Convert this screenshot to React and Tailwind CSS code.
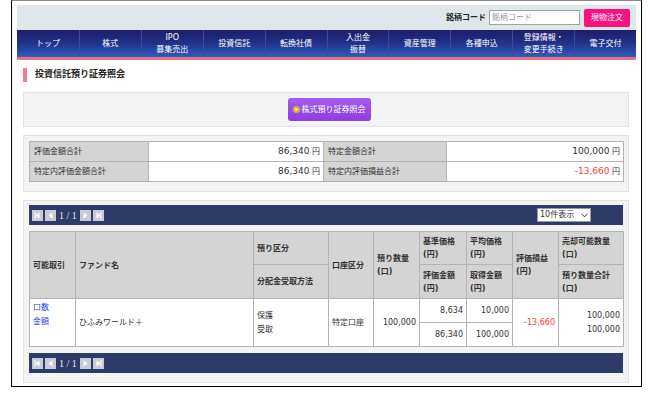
import React from 'react';

const navItems = [
  ['トップ'],
  ['株式'],
  ['IPO', '募集売出'],
  ['投資信託'],
  ['転換社債'],
  ['入出金', '振替'],
  ['資産管理'],
  ['各種申込'],
  ['登録情報・', '変更手続き'],
  ['電子交付'],
];

const PagerBtn = ({ dir, bar }) => (
  <svg width="11" height="11" viewBox="0 0 11 11">
    <rect width="11" height="11" fill="#c9ccd6" />
    {dir === 'left' ? (
      <>
        <polygon points="7.5,2.5 7.5,8.5 3.5,5.5" fill="#fff" />
        {bar && <rect x="2.5" y="2.5" width="1.2" height="6" fill="#fff" />}
      </>
    ) : (
      <>
        <polygon points="3.5,2.5 3.5,8.5 7.5,5.5" fill="#fff" />
        {bar && <rect x="7.3" y="2.5" width="1.2" height="6" fill="#fff" />}
      </>
    )}
  </svg>
);

const Pager = ({ withSelect }) => (
  <div className="h-[20px] bg-[#2c3b67] flex items-center pl-[3px] pr-[32px]">
    <div className="flex items-center gap-[2px]">
      <PagerBtn dir="left" bar />
      <PagerBtn dir="left" />
      <span className="text-[10px] text-[#ececec] font-['Liberation_Serif',serif] px-[1px]">1 / 1</span>
      <PagerBtn dir="right" />
      <PagerBtn dir="right" bar />
    </div>
    {withSelect && (
      <div className="ml-auto w-[54px] h-[14px] bg-white border border-[#9a9a9a] flex items-center justify-between px-[2px] text-[8px] text-[#333]">
        <span>10件表示</span>
        <svg width="7" height="5" viewBox="0 0 7 5"><polyline points="0.5,0.8 3.5,3.8 6.5,0.8" fill="none" stroke="#333" strokeWidth="1" /></svg>
      </div>
    )}
  </div>
);

const th = 'bg-[#d4d4d4] border border-[#b3b3b3] font-bold text-left align-middle pl-[3px] leading-[13px]';
const td = 'bg-white border border-[#b3b3b3] align-middle leading-[14px]';

export default function App() {
  return (
    <div className="w-[654px] h-[399px] bg-white font-['DejaVu_Sans','Noto_Sans_CJK_JP',sans-serif] text-[8px] text-[#333]">
      <div className="ml-[11px] w-[631px] h-[387px] border border-black border-t-[#8a8a8a] px-[5px] pt-[4px]">
        {/* header */}
        <div className="h-[25px] bg-[#dfe7eb] flex items-center justify-end pr-[6px] gap-[3px]">
          <span className="font-bold text-[8px] text-[#222]">銘柄コード</span>
          <div className="w-[91px] h-[15px] bg-white border border-[#a0a0a0] text-[#9a9a9a] pl-[2px] flex items-center">銘柄コード</div>
          <div className="ml-[1px] w-[46px] h-[18px] bg-[#f7127f] rounded-[2px] text-white flex items-center justify-center">現物注文</div>
        </div>
        {/* nav */}
        <div className="grid grid-cols-10 h-[27px] bg-gradient-to-b from-[#1a1d68] via-[#22338a] to-[#2b5dc0]">
          {navItems.map((lines, i) => (
            <div key={i} className={`flex flex-col items-center justify-center text-white leading-[12px] ${i ? 'border-l border-[#3a4a98]' : ''}`}>
              {lines.map((l) => <span key={l}>{l}</span>)}
            </div>
          ))}
        </div>
        <div className="h-[3px] bg-[#ee6f7c]" />

        <div className="ml-[6px] w-[606px]">
          {/* title */}
          <div className="mt-[8px] flex items-center gap-[8px]">
            <div className="w-[4px] h-[14px] bg-[#f27b92]" />
            <span className="text-[9px] font-bold text-[#222]">投資信託預り証券照会</span>
          </div>

          {/* button panel */}
          <div className="mt-[10px] h-[35px] bg-[#f3f3f3] border border-[#e3e3e3] flex items-center justify-center">
            <div className="ml-[6px] w-[83px] h-[23px] rounded-[3px] bg-gradient-to-b from-[#a45cf0] to-[#8d3ce0] flex items-center justify-center gap-[2px] text-white">
              <svg width="7" height="7" viewBox="0 0 7 7">
                <circle cx="3.5" cy="3.5" r="3.5" fill="#f5a623" />
                <polygon points="2.5,1.8 2.5,5.2 5.2,3.5" fill="#fff" />
              </svg>
              <span>株式預り証券照会</span>
            </div>
          </div>

          {/* summary */}
          <div className="mt-[8px] h-[57px] bg-[#f3f3f3] border border-[#e3e3e3] pt-[5px] px-[5px]">
            <table className="w-[594px] border-collapse table-fixed">
              <colgroup>
                <col className="w-[119px]" />
                <col className="w-[175px]" />
                <col className="w-[123px]" />
                <col className="w-[177px]" />
              </colgroup>
              <tbody>
                <tr className="h-[20px]">
                  <td className="bg-[#d4d4d4] border border-[#b3b3b3] pl-[4px]">評価金額合計</td>
                  <td className="bg-white border border-[#b3b3b3] text-right pr-[3px]"><span className="text-[9px]">86,340</span> 円</td>
                  <td className="bg-[#d4d4d4] border border-[#b3b3b3] pl-[4px]">特定金額合計</td>
                  <td className="bg-white border border-[#b3b3b3] text-right pr-[3px]"><span className="text-[9px]">100,000</span> 円</td>
                </tr>
                <tr className="h-[20px]">
                  <td className="bg-[#d4d4d4] border border-[#b3b3b3] pl-[4px]">特定内評価金額合計</td>
                  <td className="bg-white border border-[#b3b3b3] text-right pr-[3px]"><span className="text-[9px]">86,340</span> 円</td>
                  <td className="bg-[#d4d4d4] border border-[#b3b3b3] pl-[4px]">特定内評価損益合計</td>
                  <td className="bg-white border border-[#b3b3b3] text-right pr-[3px]"><span className="text-[9px] text-[#ff3c3c]">-13,660</span> 円</td>
                </tr>
              </tbody>
            </table>
          </div>

          {/* holdings */}
          <div className="mt-[8px] h-[183px] bg-[#f3f3f3] border border-[#e3e3e3] pt-[4px] px-[5px]">
            <Pager withSelect />
            <table className="mt-[6px] w-[594px] border-collapse table-fixed">
              <colgroup>
                <col className="w-[46px]" />
                <col className="w-[178px]" />
                <col className="w-[75px]" />
                <col className="w-[45px]" />
                <col className="w-[46px]" />
                <col className="w-[47px]" />
                <col className="w-[46px]" />
                <col className="w-[46px]" />
                <col className="w-[65px]" />
              </colgroup>
              <tbody>
                <tr className="h-[33px]">
                  <th rowSpan={2} className={th}>可能取引</th>
                  <th rowSpan={2} className={th}>ファンド名</th>
                  <th className={th}>預り区分</th>
                  <th rowSpan={2} className={th}>口座区分</th>
                  <th rowSpan={2} className={th}>預り数量<br />(口)</th>
                  <th className={th}>基準価格<br />(円)</th>
                  <th className={th}>平均価格<br />(円)</th>
                  <th rowSpan={2} className={th}>評価損益<br />(円)</th>
                  <th className={th}>売却可能数量<br />(口)</th>
                </tr>
                <tr className="h-[34px]">
                  <th className={th}>分配金受取方法</th>
                  <th className={th}>評価金額<br />(円)</th>
                  <th className={th}>取得金額<br />(円)</th>
                  <th className={th}>預り数量合計<br />(口)</th>
                </tr>
                <tr className="h-[24px]">
                  <td rowSpan={2} className={`${td} align-top pl-[3px] pt-[2px] text-[#2143e6]`}>口数<br />金額</td>
                  <td rowSpan={2} className={`${td} pl-[3px]`}>ひふみワールド＋</td>
                  <td rowSpan={2} className={`${td} pl-[3px]`}>保護<br />受取</td>
                  <td rowSpan={2} className={`${td} pl-[3px]`}>特定口座</td>
                  <td rowSpan={2} className={`${td} text-right pr-[3px]`}>100,000</td>
                  <td className={`${td} text-right pr-[3px]`}>8,634</td>
                  <td className={`${td} text-right pr-[3px]`}>10,000</td>
                  <td rowSpan={2} className={`${td} text-right pr-[3px] text-[#ff3c3c]`}>-13,660</td>
                  <td rowSpan={2} className={`${td} text-right pr-[3px]`}>100,000<br />100,000</td>
                </tr>
                <tr className="h-[24px]">
                  <td className={`${td} text-right pr-[3px]`}>86,340</td>
                  <td className={`${td} text-right pr-[3px]`}>100,000</td>
                </tr>
              </tbody>
            </table>
            <div className="mt-[6px]">
              <Pager />
            </div>
          </div>
        </div>
      </div>
    </div>
  );
}
